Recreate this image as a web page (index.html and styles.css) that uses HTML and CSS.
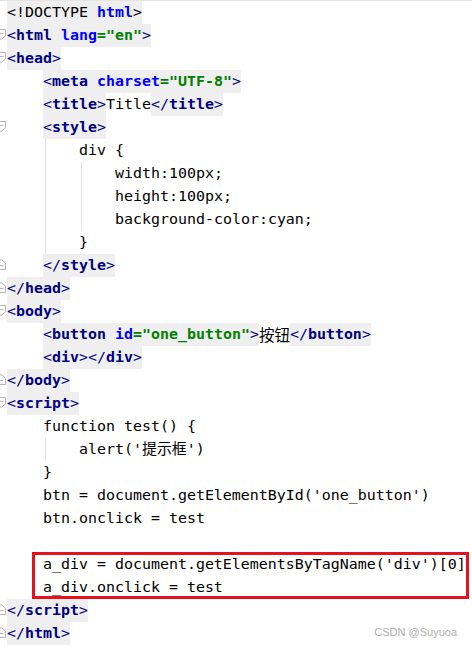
FILE: index.html
```html
<!DOCTYPE html>
<html lang="en">
<head>
<meta charset="UTF-8">
<title>Editor</title>
<link rel="stylesheet" href="styles.css">
</head>
<body>
<div class="editor">
  <div class="line"><span class="gut"></span><span class="hl"><span class="pl">&lt;!DOCTYPE </span><span class="at">html</span><span class="pl">&gt;</span></span></div>
  <div class="line"><span class="gut"><svg class="fold" viewBox="0 0 10 11" width="10" height="11"><path d="M0.5 0.5H9.5V7L5 10.5L0.5 7Z"/><path d="M2.5 4.5H7.5"/></svg></span><span class="hl"><span class="br">&lt;</span><span class="tg">html</span> <span class="at">lang</span><span class="av">="en"</span><span class="br">&gt;</span></span></div>
  <div class="line"><span class="gut"><svg class="fold" viewBox="0 0 10 11" width="10" height="11"><path d="M0.5 0.5H9.5V7L5 10.5L0.5 7Z"/><path d="M2.5 4.5H7.5"/></svg></span><span class="hl"><span class="br">&lt;</span><span class="tg">head</span><span class="br">&gt;</span></span></div>
  <div class="line"><span class="gut"></span><span class="ind"></span><span class="hl"><span class="br">&lt;</span><span class="tg">meta</span> <span class="at">charset</span><span class="av">="UTF-8"</span><span class="br">&gt;</span></span></div>
  <div class="line"><span class="gut"></span><span class="ind"></span><span class="hl"><span class="br">&lt;</span><span class="tg">title</span><span class="br">&gt;</span></span><span class="pl">Title</span><span class="hl"><span class="br">&lt;/</span><span class="tg">title</span><span class="br">&gt;</span></span></div>
  <div class="line"><span class="gut"><svg class="fold" viewBox="0 0 10 11" width="10" height="11"><path d="M0.5 0.5H9.5V7L5 10.5L0.5 7Z"/><path d="M2.5 4.5H7.5"/></svg></span><span class="ind"></span><span class="hl"><span class="br">&lt;</span><span class="tg">style</span><span class="br">&gt;</span></span></div>
  <div class="line"><span class="gut"></span><span class="ind"></span><span class="ind guide"></span><span class="pl">div {</span></div>
  <div class="line"><span class="gut"></span><span class="ind"></span><span class="ind guide"></span><span class="ind guide"></span><span class="pl">width:100px;</span></div>
  <div class="line"><span class="gut"></span><span class="ind"></span><span class="ind guide"></span><span class="ind guide"></span><span class="pl">height:100px;</span></div>
  <div class="line"><span class="gut"></span><span class="ind"></span><span class="ind guide"></span><span class="ind guide"></span><span class="pl">background-color:cyan;</span></div>
  <div class="line"><span class="gut"></span><span class="ind"></span><span class="ind guide"></span><span class="pl">}</span></div>
  <div class="line"><span class="gut"><svg class="fold" viewBox="0 0 10 11" width="10" height="11"><path d="M0.5 10.5H9.5V4L5 0.5L0.5 4Z"/><path d="M2.5 6.5H7.5"/></svg></span><span class="ind"></span><span class="hl"><span class="br">&lt;/</span><span class="tg">style</span><span class="br">&gt;</span></span></div>
  <div class="line"><span class="gut"><svg class="fold" viewBox="0 0 10 11" width="10" height="11"><path d="M0.5 10.5H9.5V4L5 0.5L0.5 4Z"/><path d="M2.5 6.5H7.5"/></svg></span><span class="hl"><span class="br">&lt;/</span><span class="tg">head</span><span class="br">&gt;</span></span></div>
  <div class="line"><span class="gut"><svg class="fold" viewBox="0 0 10 11" width="10" height="11"><path d="M0.5 0.5H9.5V7L5 10.5L0.5 7Z"/><path d="M2.5 4.5H7.5"/></svg></span><span class="hl"><span class="br">&lt;</span><span class="tg">body</span><span class="br">&gt;</span></span></div>
  <div class="line"><span class="gut"></span><span class="ind"></span><span class="hl"><span class="br">&lt;</span><span class="tg">button</span> <span class="at">id</span><span class="av">="one_button"</span><span class="br">&gt;</span></span><span class="pl cjk-serif">按钮</span><span class="hl"><span class="br">&lt;/</span><span class="tg">button</span><span class="br">&gt;</span></span></div>
  <div class="line"><span class="gut"></span><span class="ind"></span><span class="hl"><span class="br">&lt;</span><span class="tg">div</span><span class="br">&gt;&lt;/</span><span class="tg">div</span><span class="br">&gt;</span></span></div>
  <div class="line"><span class="gut"><svg class="fold" viewBox="0 0 10 11" width="10" height="11"><path d="M0.5 10.5H9.5V4L5 0.5L0.5 4Z"/><path d="M2.5 6.5H7.5"/></svg></span><span class="hl"><span class="br">&lt;/</span><span class="tg">body</span><span class="br">&gt;</span></span></div>
  <div class="line"><span class="gut"><svg class="fold" viewBox="0 0 10 11" width="10" height="11"><path d="M0.5 0.5H9.5V7L5 10.5L0.5 7Z"/><path d="M2.5 4.5H7.5"/></svg></span><span class="hl"><span class="br">&lt;</span><span class="tg">script</span><span class="br">&gt;</span></span></div>
  <div class="line"><span class="gut"></span><span class="ind"></span><span class="pl">function test() {</span></div>
  <div class="line"><span class="gut"></span><span class="ind"></span><span class="ind guide"></span><span class="pl">alert('提示框')</span></div>
  <div class="line"><span class="gut"></span><span class="ind"></span><span class="pl">}</span></div>
  <div class="line"><span class="gut"></span><span class="ind"></span><span class="pl">btn = document.getElementById('one_button')</span></div>
  <div class="line"><span class="gut"></span><span class="ind"></span><span class="pl">btn.onclick = test</span></div>
  <div class="line"><span class="gut"></span></div>
  <div class="marked">
    <div class="line"><span class="gut"></span><span class="ind"></span><span class="pl">a_div = document.getElementsByTagName('div')[0]</span></div>
    <div class="line"><span class="gut"></span><span class="ind"></span><span class="pl">a_div.onclick = test</span></div>
  </div>
  <div class="line"><span class="gut"><svg class="fold" viewBox="0 0 10 11" width="10" height="11"><path d="M0.5 10.5H9.5V4L5 0.5L0.5 4Z"/><path d="M2.5 6.5H7.5"/></svg></span><span class="hl"><span class="br">&lt;/</span><span class="tg">script</span><span class="br">&gt;</span></span></div>
  <div class="line"><span class="gut"><svg class="fold" viewBox="0 0 10 11" width="10" height="11"><path d="M0.5 10.5H9.5V4L5 0.5L0.5 4Z"/><path d="M2.5 6.5H7.5"/></svg></span><span class="hl"><span class="br">&lt;/</span><span class="tg">html</span><span class="br">&gt;</span></span></div>
  <div class="watermark">CSDN @Suyuoa</div>
</div>
</body>
</html>
```

FILE: styles.css
```css
html, body {
  margin: 0;
  padding: 0;
  background: #ffffff;
}

.editor {
  position: relative;
  width: 472px;
  height: 647px;
  box-sizing: border-box;
  border-top: 1px solid #e4e4e4;
  font-family: "DejaVu Sans Mono", "Noto Sans CJK SC", monospace;
  font-size: 14.95px;
  color: #000000;
  overflow: hidden;
}

.line {
  display: flex;
  align-items: stretch;
  height: 23px;
  line-height: 23px;
  white-space: pre;
}

.gut {
  flex: none;
  width: 7px;
  display: flex;
  align-items: center;
  overflow: hidden;
}

.fold {
  flex: none;
  margin-left: -4px;
  margin-top: -3px;
  fill: #ffffff;
  stroke: #b4b4b4;
  stroke-width: 1;
}

.ind {
  flex: none;
  display: inline-block;
  width: 36px;
}

.ind.guide {
  background: linear-gradient(to right, transparent 2px, #e2e2e2 2px, #e2e2e2 3px, transparent 3px);
}

.hl {
  display: inline-block;
  background: #efefef;
}

.pl {
  color: #000000;
}

.br {
  color: #000080;
}

.tg {
  color: #000080;
  font-weight: bold;
}

.at {
  color: #0000ff;
  font-weight: bold;
}

.av {
  color: #008000;
  font-weight: bold;
}

.cjk-serif {
  font-family: "Noto Sans CJK SC", sans-serif;
  font-size: 15.5px;
}

.marked {
  position: relative;
}

.marked::after {
  content: "";
  position: absolute;
  top: -1px;
  bottom: 0;
  left: 32px;
  right: 3px;
  border: 3px solid #e5121c;
  pointer-events: none;
}

.watermark {
  position: absolute;
  right: 15px;
  bottom: 9px;
  font-family: "Liberation Sans", Arial, sans-serif;
  font-size: 11px;
  color: #b0b0b0;
}
```
